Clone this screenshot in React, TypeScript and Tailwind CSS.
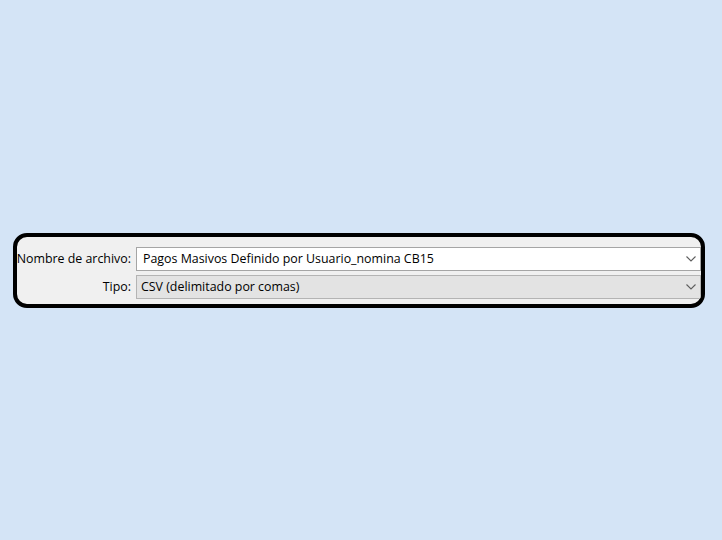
import React from "react";

function Chevron() {
  return (
    <svg width="10" height="6" viewBox="0 0 10 6" className="shrink-0">
      <path d="M0.5 0.5 L5 5 L9.5 0.5" fill="none" stroke="#5f5f5f" strokeWidth="1.1" />
    </svg>
  );
}

export default function App() {
  return (
    <div
      className="min-h-[540px] w-full bg-[#d4e4f6] pt-[233px] pl-[13px]"
      style={{ fontFamily: '"Open Sans", "Noto Sans", sans-serif' }}
    >
      <div className="w-[692px] h-[75px] rounded-[14px] border-4 border-black bg-[#f0f0f0] overflow-hidden pt-[10px]">
        <div className="grid grid-cols-[114px_1fr] gap-x-[5px] gap-y-[4px] text-[12.4px] text-black">
          <div className="flex h-[24px] items-center justify-end whitespace-nowrap">Nombre de archivo:</div>
          <div className="flex h-[24px] items-center border border-[#a5a5a5] bg-white pl-[6px] pr-[4px]">
            <span className="flex-1 whitespace-nowrap">Pagos Masivos Definido por Usuario_nomina CB15</span>
            <Chevron />
          </div>
          <div className="flex h-[24px] items-center justify-end whitespace-nowrap">Tipo:</div>
          <div className="flex h-[24px] items-center border border-[#b4b4b4] bg-[#e3e3e3] pl-[4px] pr-[4px]">
            <span className="flex-1 whitespace-nowrap">CSV (delimitado por comas)</span>
            <Chevron />
          </div>
        </div>
      </div>
    </div>
  );
}
